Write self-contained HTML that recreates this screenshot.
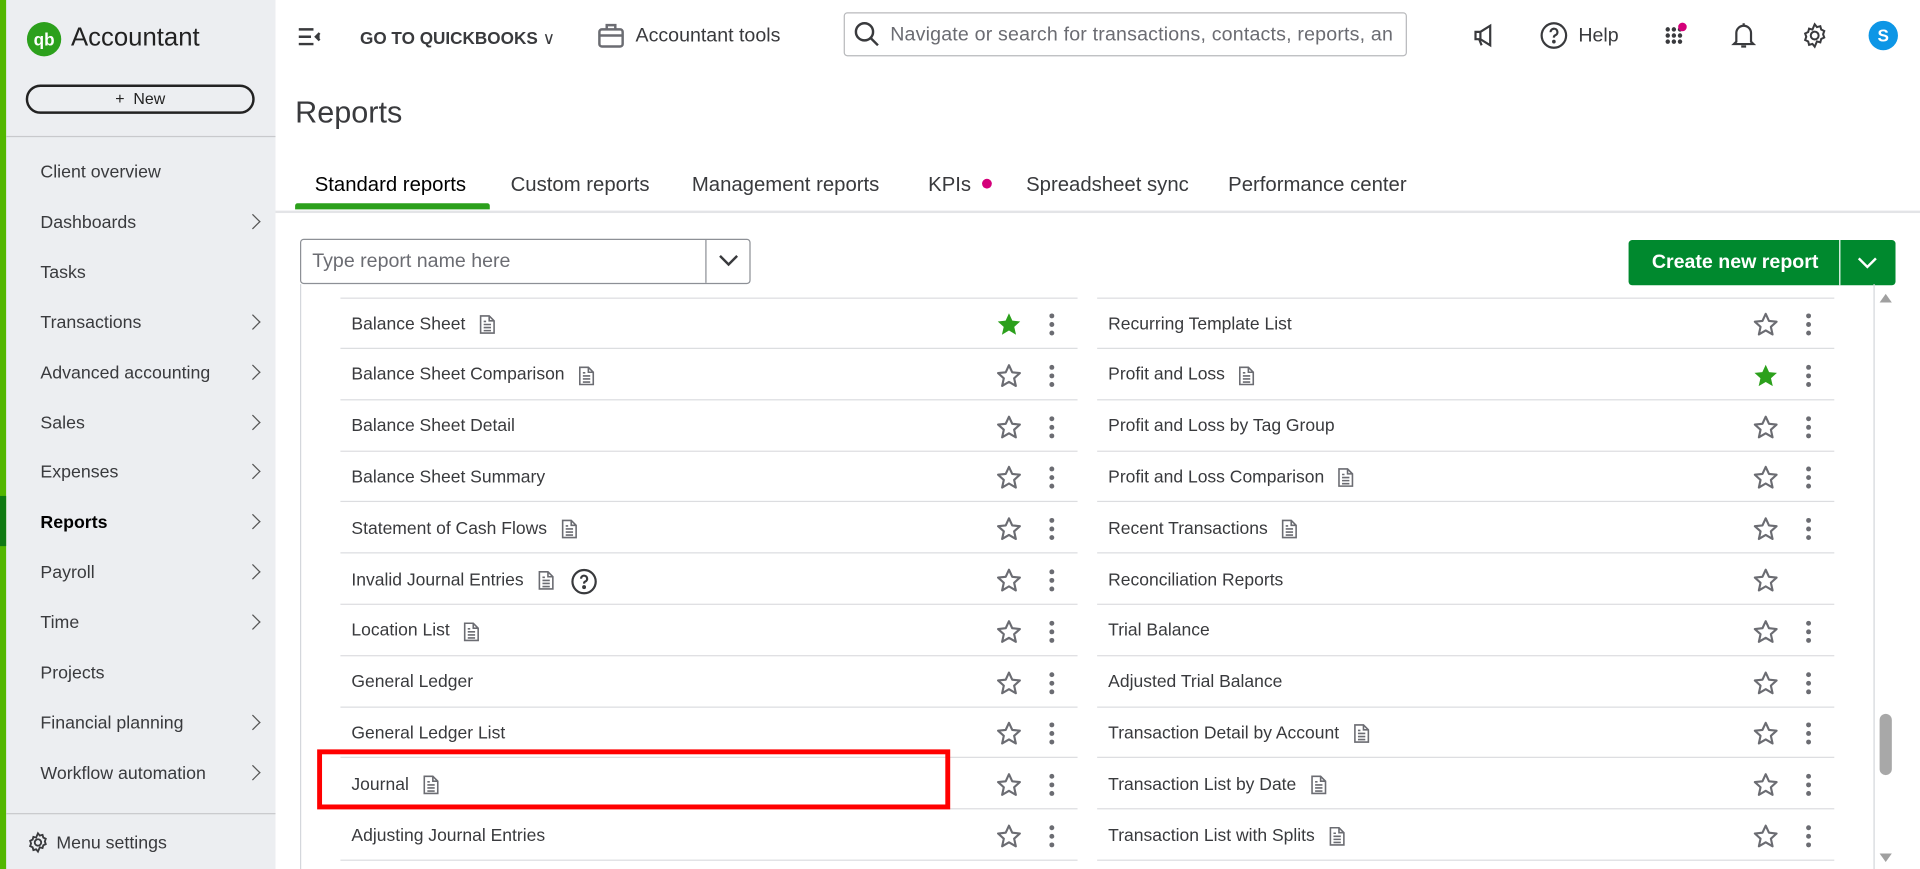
<!DOCTYPE html>
<html><head><meta charset="utf-8"><style>
*{box-sizing:border-box;margin:0;padding:0}
html,body{width:1920px;height:869px;overflow:hidden;background:#fff}
#w{width:1568px;height:710px;transform:scale(1.22449);transform-origin:0 0;position:relative;font-family:"Liberation Sans",sans-serif;color:#393a3d}
.a{position:absolute}
.side{left:0;top:0;width:225px;height:710px;background:#eceef1}
.nav{position:absolute;left:33px;font-size:14.5px;color:#393a3d;transform:translateY(-50%);margin-top:1px}
.chev{position:absolute;left:202px;width:9px;height:9px;border-right:1.8px solid #555;border-top:1.8px solid #555;transform:translateY(-50%) rotate(45deg)}
.tab{position:absolute;top:141px;font-size:16.6px;color:#393a3d}
.row{position:absolute;height:42px;border-bottom:1px solid #dcdde0;font-size:14.3px}
.row span.t{position:absolute;left:9px;top:50%;transform:translateY(-50%);margin-top:1px;white-space:nowrap}
</style></head><body><div id="w">
<div class="a side"></div>
<div class="a" style="left:0;top:0;width:5px;height:710px;background:#53b700"></div>
<div class="a" style="left:0;top:405px;width:5px;height:41px;background:#0f7a12"></div>
<svg class="a" style="left:21px;top:17px" width="30" height="30" viewBox="0 0 30 30"><circle cx="15" cy="15" r="14" fill="#2ca01c"/><text x="15" y="20" font-size="14" font-weight="bold" fill="#fff" text-anchor="middle" font-family="Liberation Sans">qb</text></svg>
<div class="a" style="left:58px;top:19px;font-size:21px;color:#222">Accountant</div>
<div class="a" style="left:21px;top:69px;width:187px;height:24px;border:2px solid #222;border-radius:12px;text-align:center;font-size:13px;line-height:20px;color:#222">+&nbsp;&nbsp;New</div>
<div class="a" style="left:5px;top:111px;width:220px;height:1px;background:#c8c9cc"></div>
<div class="nav" style="top:140px">Client overview</div>
<div class="nav" style="top:181px">Dashboards</div><div class="chev" style="top:181px"></div>
<div class="nav" style="top:222px">Tasks</div>
<div class="nav" style="top:263px">Transactions</div><div class="chev" style="top:263px"></div>
<div class="nav" style="top:304px">Advanced accounting</div><div class="chev" style="top:304px"></div>
<div class="nav" style="top:345px">Sales</div><div class="chev" style="top:345px"></div>
<div class="nav" style="top:385px">Expenses</div><div class="chev" style="top:385px"></div>
<div class="nav" style="top:426px;font-weight:bold;color:#000">Reports</div><div class="chev" style="top:426px"></div>
<div class="nav" style="top:467px">Payroll</div><div class="chev" style="top:467px"></div>
<div class="nav" style="top:508px">Time</div><div class="chev" style="top:508px"></div>
<div class="nav" style="top:549px">Projects</div>
<div class="nav" style="top:590px">Financial planning</div><div class="chev" style="top:590px"></div>
<div class="nav" style="top:631px">Workflow automation</div><div class="chev" style="top:631px"></div>
<div class="a" style="left:5px;top:664px;width:220px;height:1px;background:#c8c9cc"></div>
<svg class="a" style="left:22px;top:679px" width="18" height="18" viewBox="0 0 24 24" fill="none" stroke="#393a3d" stroke-width="2"><circle cx="12" cy="12" r="3.5"/><path d="M12 2l2 2.5 3-.8.8 3 2.7 1.3-1 2.9 1 2.9-2.7 1.3-.8 3-3-.8L12 22l-2-2.5-3 .8-.8-3-2.7-1.3 1-2.9-1-2.9 2.7-1.3.8-3 3 .8z"/></svg>
<div class="a" style="left:46px;top:681px;font-size:14.5px">Menu settings</div>

<svg class="a" style="left:243px;top:22px" width="20" height="16" viewBox="0 0 20 16" stroke="#393a3d" stroke-width="2"><path d="M1 2h12M1 8h10M1 14h12"/><path d="M18 5l-3 3 3 3" fill="#393a3d"/></svg>
<div class="a" style="left:294px;top:23px;font-size:14px;font-weight:bold;color:#393a3d">GO TO QUICKBOOKS <span style="font-weight:normal">&#x2228;</span></div>
<svg class="a" style="left:488px;top:18px" width="22" height="22" viewBox="0 0 22 22" fill="none" stroke="#6b6c72" stroke-width="2"><rect x="1.5" y="6" width="19" height="14" rx="2"/><path d="M7.5 6V2.5h7V6M1.5 11h19"/></svg>
<div class="a" style="left:519px;top:21px;font-size:16px;color:#393a3d">Accountant tools</div>
<div class="a" style="left:689px;top:10px;width:460px;height:36px;border:1.5px solid #b8b9bc;border-radius:3px"></div>
<svg class="a" style="left:697px;top:17px" width="22" height="22" viewBox="0 0 22 22" fill="none" stroke="#393a3d" stroke-width="2"><circle cx="9" cy="9" r="7"/><path d="M14 14l6 6"/></svg>
<div class="a" style="left:727px;top:20px;font-size:16px;color:#6b6c72;white-space:nowrap;width:410px;overflow:hidden;letter-spacing:.15px">Navigate or search for transactions, contacts, reports, and more</div>
<svg class="a" style="left:1202px;top:19px" width="20" height="20" viewBox="0 0 20 20" fill="none" stroke="#393a3d" stroke-width="1.8"><path d="M3 7h4l8-5v16l-8-5H3zM7 7v6M6 13l2 5"/></svg>
<svg class="a" style="left:1257px;top:17px" width="24" height="24" viewBox="0 0 24 24" fill="none" stroke="#393a3d" stroke-width="1.8"><circle cx="12" cy="12" r="10"/><path d="M9.3 9.3a2.8 2.8 0 1 1 3.7 2.6c-.8.4-1 .9-1 1.8"/><circle cx="12" cy="17" r=".6" fill="#393a3d"/></svg>
<div class="a" style="left:1289px;top:21px;font-size:16px">Help</div>
<svg class="a" style="left:1358px;top:18px" width="24" height="24" viewBox="0 0 24 24" fill="#393a3d"><circle cx="4" cy="6" r="1.8"/><circle cx="9" cy="6" r="1.8"/><circle cx="14" cy="6" r="1.8"/><circle cx="4" cy="11" r="1.8"/><circle cx="9" cy="11" r="1.8"/><circle cx="14" cy="11" r="1.8"/><circle cx="4" cy="16" r="1.8"/><circle cx="9" cy="16" r="1.8"/><circle cx="14" cy="16" r="1.8"/><circle cx="16" cy="4" r="3.5" fill="#d4007a"/></svg>
<svg class="a" style="left:1413px;top:17px" width="22" height="24" viewBox="0 0 22 24" fill="none" stroke="#393a3d" stroke-width="1.8"><path d="M11 2v2M5 17V10a6 6 0 0 1 12 0v7l2 2H3zM9 21h4"/></svg>
<svg class="a" style="left:1471px;top:18px" width="22" height="22" viewBox="0 0 24 24" fill="none" stroke="#393a3d" stroke-width="1.8"><circle cx="12" cy="12" r="3.5"/><path d="M12 2l2 2.5 3-.8.8 3 2.7 1.3-1 2.9 1 2.9-2.7 1.3-.8 3-3-.8L12 22l-2-2.5-3 .8-.8-3-2.7-1.3 1-2.9-1-2.9 2.7-1.3.8-3 3 .8z"/></svg>
<div class="a" style="left:1526px;top:17px;width:24px;height:24px;border-radius:50%;background:#0d96e6;color:#fff;font-weight:bold;font-size:14px;text-align:center;line-height:24px">S</div>

<div class="a" style="left:241px;top:78px;font-size:25px;color:#393a3d">Reports</div>
<div class="tab" style="left:257px;color:#000">Standard reports</div>
<div class="tab" style="left:417px">Custom reports</div>
<div class="tab" style="left:565px">Management reports</div>
<div class="tab" style="left:758px">KPIs <span style="display:inline-block;width:8px;height:8px;border-radius:50%;background:#d4007a;margin-left:4px;vertical-align:2px"></span></div>
<div class="tab" style="left:838px">Spreadsheet sync</div>
<div class="tab" style="left:1003px">Performance center</div>
<div class="a" style="left:225px;top:172px;width:1343px;height:2px;background:#e3e4e7"></div>
<div class="a" style="left:241px;top:166px;width:159px;height:5px;background:#2ca01c;border-radius:2px 2px 0 0"></div>

<div class="a" style="left:245px;top:195px;width:368px;height:37px;border:1px solid #8d9096;border-radius:3px"></div>
<div class="a" style="left:576px;top:196px;width:1px;height:35px;background:#8d9096"></div>
<div class="a" style="left:255px;top:205px;font-size:16px;color:#6b6c72">Type report name here</div>
<svg class="a" style="left:586px;top:206px" width="18" height="14" viewBox="0 0 18 14" fill="none" stroke="#393a3d" stroke-width="2"><path d="M2 3l7 7 7-7"/></svg>
<div class="a" style="left:1330px;top:196px;width:218px;height:37px;background:#00892e;border-radius:3px"></div>
<div class="a" style="left:1502px;top:196px;width:1px;height:37px;background:#fff"></div>
<div class="a" style="left:1349px;top:206px;font-size:16px;font-weight:bold;color:#fff">Create new report</div>
<svg class="a" style="left:1516px;top:208px" width="18" height="13" viewBox="0 0 18 13" fill="none" stroke="#fff" stroke-width="2"><path d="M2 3l7 7 7-7"/></svg>

<div class="a" style="left:245px;top:232px;width:1px;height:478px;background:#d4d7dc"></div>
<div class="a" style="left:1530px;top:232px;width:1px;height:478px;background:#d4d7dc"></div>
<div class="a" style="left:1535px;top:240px;width:0;height:0;border-left:5px solid transparent;border-right:5px solid transparent;border-bottom:7px solid #a0a0a0"></div>
<div class="a" style="left:1535px;top:697px;width:0;height:0;border-left:5px solid transparent;border-right:5px solid transparent;border-top:7px solid #a0a0a0"></div>
<div class="a" style="left:1535px;top:583px;width:10px;height:50px;border-radius:5px;background:#a8a8a8"></div>

<div id="L"></div>
<div class="a" style="left:259px;top:612px;width:517px;height:49px;border:4px solid #f00"></div>
</div>
<script>
var doc='<svg width="14" height="16" viewBox="0 0 14 16" fill="none" stroke="#6b6c72" stroke-width="1.3"><path d="M1.5 1h7l4 4v10h-11z M8.5 1v4h4 M4 8h6M4 10.5h6M4 13h6M4 5.5h2"/></svg>';
var help='<svg width="22" height="22" viewBox="0 0 22 22" fill="none" stroke="#393a3d" stroke-width="1.8"><circle cx="11" cy="11" r="9.5"/><path d="M8.5 8.6a2.5 2.5 0 1 1 3.3 2.4c-.7.3-.8.8-.8 1.6"/><circle cx="11" cy="15.5" r=".7" fill="#393a3d"/></svg>';
function star(f){return f?'<svg width="22" height="22" viewBox="0 0 24 24"><path d="M12 2l3 6.6 7 .7-5.3 4.8 1.6 7L12 17.4 5.7 21.1l1.6-7L2 9.3l7-.7z" fill="#2ca01c"/></svg>':'<svg width="22" height="22" viewBox="0 0 24 24"><path d="M12 2.5l2.9 6.3 6.8.7-5.1 4.6 1.5 6.8L12 17.3l-6.1 3.6 1.5-6.8-5.1-4.6 6.8-.7z" fill="none" stroke="#6b6c72" stroke-width="1.9" stroke-linejoin="round"/></svg>';}
var dots='<svg width="6" height="20" viewBox="0 0 6 20" fill="#6b6c72"><circle cx="3" cy="3" r="2"/><circle cx="3" cy="10" r="2"/><circle cx="3" cy="17" r="2"/></svg>';
var Lr=[["Balance Sheet",1,1,0],["Balance Sheet Comparison",1,0,0],["Balance Sheet Detail",0,0,0],["Balance Sheet Summary",0,0,0],["Statement of Cash Flows",1,0,0],["Invalid Journal Entries",1,0,1],["Location List",1,0,0],["General Ledger",0,0,0],["General Ledger List",0,0,0],["Journal",1,0,0],["Adjusting Journal Entries",0,0,0]];
var Rr=[["Recurring Template List",0,0,1],["Profit and Loss",1,1,1],["Profit and Loss by Tag Group",0,0,1],["Profit and Loss Comparison",1,0,1],["Recent Transactions",1,0,1],["Reconciliation Reports",0,0,0],["Trial Balance",0,0,1],["Adjusted Trial Balance",0,0,1],["Transaction Detail by Account",1,0,1],["Transaction List by Date",1,0,1],["Transaction List with Splits",1,0,1]];
var h='';
function mk(list,x){
 for(var i=0;i<list.length;i++){var r=list[i];var top=244+i*41.8;
  h+='<div class="row" style="left:'+x+'px;top:'+(top-1)+'px;width:602px;border-top:'+(i==0?'1px solid #dcdde0':'0')+'">';
  h+='<span class="t" id="t'+x+'_'+i+'">'+r[0]+'</span></div>';
 }
}
mk(Lr,278);mk(Rr,896);
document.getElementById('L').innerHTML=h;
h='';
function icons(list,x,isL){
 for(var i=0;i<list.length;i++){var r=list[i];var cy=244+i*41.8+22;
  var t=document.getElementById('t'+x+'_'+i);var ex=x+9+t.offsetWidth;
  if(r[1])h+='<div class="a" style="left:'+(ex+11)+'px;top:'+(cy-9)+'px">'+doc+'</div>';
  if(isL&&r[3])h+='<div class="a" style="left:'+(ex+38)+'px;top:'+(cy-11)+'px">'+help+'</div>';
  var sx=isL?813:1431;h+='<div class="a" style="left:'+sx+'px;top:'+(cy-12)+'px">'+star(r[2])+'</div>';
  if(isL||r[3])h+='<div class="a" style="left:'+(sx+43)+'px;top:'+(cy-11)+'px">'+dots+'</div>';
 }
}
icons(Lr,278,1);icons(Rr,896,0);
document.getElementById('L').insertAdjacentHTML('beforeend',h);
</script>
</body></html>
